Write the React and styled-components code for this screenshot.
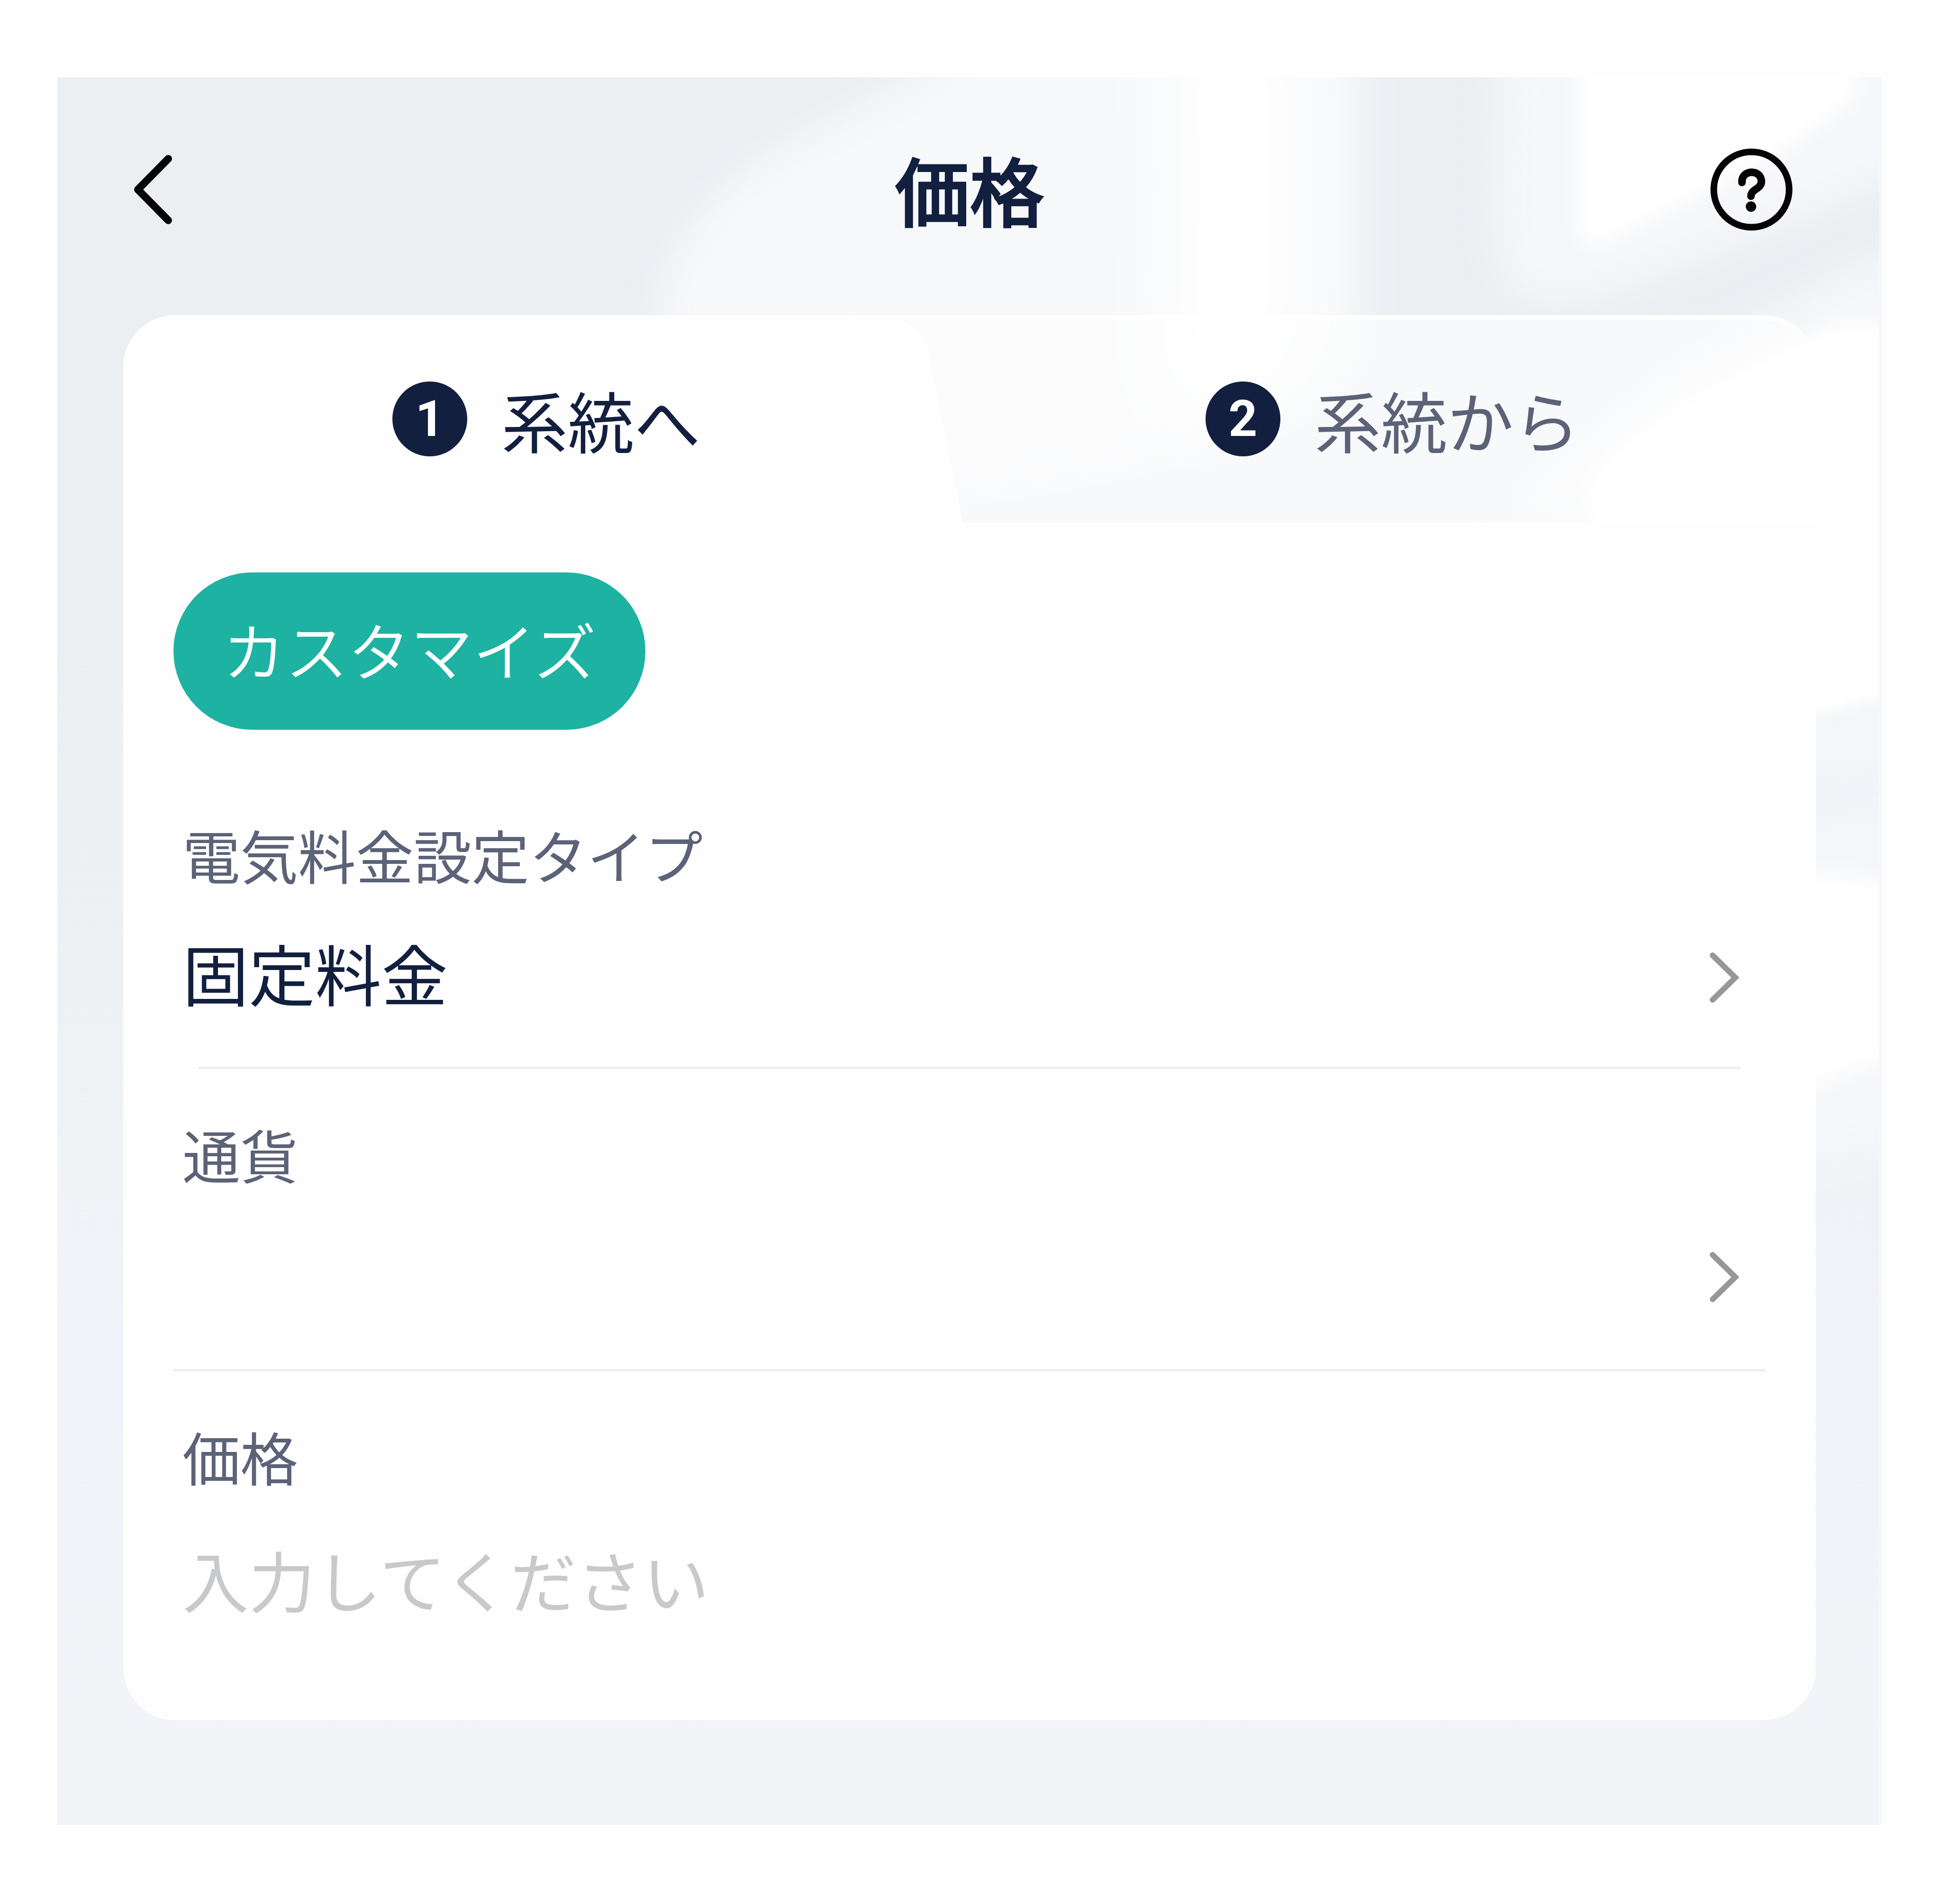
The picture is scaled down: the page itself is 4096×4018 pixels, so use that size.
import React, { useState } from "react";
import styled, { createGlobalStyle } from "styled-components";

const color = {
  navy: "#121f3e",
  muted: "#5c6277",
  placeholder: "#c8c9cb",
  accent: "#1eb2a2",
  line: "#eeeff2",
  chevron: "#979797",
};

const GlobalStyle = createGlobalStyle`
  *, *::before, *::after { box-sizing: border-box; }
  body {
    margin: 0;
    background: #fefefe;
    color: ${color.navy};
    font-family: "Noto Sans CJK JP", sans-serif;
  }
  button, input { font: inherit; color: inherit; }
`;

const Page = styled.main`
  padding: 163px 125px 165px 121px;
`;

const Screen = styled.div`
  position: relative;
  isolation: isolate;
  overflow: hidden;
  padding-bottom: 221px;
  background: linear-gradient(#ebeff2 0%, #ebeff2 30%, #eef1f4 52%, #f2f3f8 72%, #f3f4f8 100%);
`;

const Backdrop = styled.svg`
  position: absolute;
  inset: 0;
  z-index: -1;
  width: 100%;
  height: 100%;
`;

const Header = styled.header`
  display: grid;
  grid-template-columns: 1fr auto 1fr;
  align-items: center;
  height: 474px;
  margin-bottom: 28px;
  padding: 0 162px;
`;

const IconButton = styled.button`
  display: flex;
  justify-self: ${(p) => p.$side};
  padding: 0 ${(p) => (p.$side === "end" ? "26px" : "0")} 0 0;
  border: 0;
  background: none;
  cursor: pointer;
`;

const Title = styled.h1`
  margin: 0;
  padding-bottom: 4px;
  font-size: 158px;
  font-weight: 500;
  line-height: 228px;
  -webkit-text-stroke: 3px ${color.navy};
`;

const Card = styled.section`
  margin: 0 139px;
`;

const TabBar = styled.div`
  position: relative;
  isolation: isolate;
  display: flex;
  height: 438px;
  overflow: hidden;
  border-radius: 110px 110px 0 0;
  background: rgba(255, 255, 255, 0.6);
`;

const TabShape = styled.svg`
  position: absolute;
  inset: 0;
  z-index: -1;
  width: 100%;
  height: 100%;
`;

const Tab = styled.button`
  flex: 1;
  display: flex;
  align-items: center;
  justify-content: center;
  gap: 72px;
  padding: 0;
  border: 0;
  background: none;
  color: ${(p) => (p.$muted ? color.muted : color.navy)};
  font-size: 140px;
  line-height: 200px;
  cursor: pointer;
`;

const Badge = styled.span`
  display: flex;
  align-items: center;
  justify-content: center;
  width: 158px;
  height: 158px;
  border-radius: 50%;
  background: ${color.navy};
  color: #fff;
  font-family: Roboto, sans-serif;
  font-size: 106px;
  font-weight: 700;
  line-height: 158px;
`;

const Panel = styled.div`
  padding: 105px 106px 0;
  border-radius: 0 0 110px 110px;
  background: #fefefe;
`;

const Pill = styled.button`
  display: block;
  height: 332px;
  margin-bottom: 84px;
  padding: 0 104px 10px;
  border: 0;
  border-radius: 166px;
  background: ${color.accent};
  color: #fff;
  font-size: 132px;
  font-weight: 350;
  line-height: 200px;
  cursor: pointer;
`;

const Field = styled.div`
  padding: 90px 53px ${(p) => p.$bottom}px 19px;
`;

const Label = styled.label`
  display: block;
  margin-bottom: 73px;
  color: ${color.muted};
  font-size: 122px;
  line-height: 176px;
`;

const Picker = styled.button`
  display: flex;
  align-items: center;
  justify-content: space-between;
  width: 100%;
  height: 200px;
  padding: 0 3px 0 0;
  border: 0;
  background: none;
  text-align: left;
  cursor: pointer;
`;

const Value = styled.span`
  align-self: flex-start;
  font-size: 140px;
  line-height: 176px;
`;

const TextInput = styled.input`
  display: block;
  width: 100%;
  height: 200px;
  padding: 0 0 4px;
  border: 0;
  outline: 0;
  background: none;
  font-size: 140px;
  line-height: 196px;
  &::placeholder {
    color: ${color.placeholder};
    opacity: 1;
  }
`;

const Divider = styled.hr`
  height: 5px;
  margin: 0 ${(p) => p.$inset}px;
  border: 0;
  background: ${color.line};
`;

function WindowLight() {
  return (
    <Backdrop viewBox="46 63 1474 1412" preserveAspectRatio="none" aria-hidden="true">
      <defs>
        <filter id="soft" x="-30%" y="-30%" width="160%" height="160%" colorInterpolationFilters="sRGB">
          <feGaussianBlur stdDeviation="18" />
        </filter>
        <filter id="softer" x="-100%" y="-30%" width="300%" height="160%" colorInterpolationFilters="sRGB">
          <feGaussianBlur stdDeviation="32" />
        </filter>
        <filter id="edge" x="-30%" y="-30%" width="160%" height="160%" colorInterpolationFilters="sRGB">
          <feGaussianBlur stdDeviation="8" />
        </filter>
      </defs>
      <path
        d="M532 420V255C536 200 575 150 640 115C690 88 740 70 800 20H1100V290C1080 330 1000 370 780 400Z"
        fill="#f7f8fa"
        filter="url(#soft)"
      />
      <path
        d="M930 10H1056V290L970 350C900 330 960 220 930 10Z"
        fill="#fff"
        fillOpacity="0.9"
        filter="url(#softer)"
      />
      <path d="M1212 20H1560V130L1420 190L1290 240L1235 245C1215 240 1210 200 1208 180Z" fill="#f6f7f9" filter="url(#soft)" />
      <path d="M1274 20H1500V80L1430 130L1310 190Q1274 212 1274 180Z" fill="#fff" filter="url(#edge)" />
      <path d="M1360 290L1560 186V420H1200Z" fill="#f6f7f9" filter="url(#soft)" />
      <path
        d="M1282 440V395C1290 360 1380 310 1480 262L1560 262V562L1467 584L1282 600Z"
        fill="#fff"
        filter="url(#edge)"
      />
      <path d="M1400 596L1467 584L1560 560V730L1467 704H1400Z" fill="#f5f6f8" filter="url(#edge)" />
      <path d="M1400 642L1560 620V648L1400 662Z" fill="#f1f3f7" filter="url(#edge)" />
      <path d="M1400 860L1560 830V920L1400 960Z" fill="#f6f7f9" filter="url(#soft)" />
      <path d="M1400 704H1467Q1500 704 1560 724V842L1467 878L1400 888Z" fill="#fff" filter="url(#edge)" />
      <rect x="1518" y="63" width="2" height="1412" fill="#f8f8fa" />
    </Backdrop>
  );
}

function BackIcon() {
  return (
    <svg width="80" height="146" viewBox="0 0 80 146" fill="none" aria-hidden="true">
      <path d="M72 8L8 73L72 138" stroke="#050303" strokeWidth="16" strokeLinecap="round" strokeLinejoin="round" />
    </svg>
  );
}

function HelpIcon() {
  return (
    <svg width="174" height="174" viewBox="-87 -87 174 174" fill="none" aria-hidden="true">
      <circle r="79.5" stroke="#050303" strokeWidth="14" />
      <path
        d="M-20 -15V-17C-20 -43 21 -43 21 -17C21 -1 -1 -1 -1 14"
        stroke="#050303"
        strokeWidth="16"
        strokeLinecap="round"
      />
      <circle cx="-1" cy="36" r="11" fill="#050303" />
    </svg>
  );
}

function ChevronRight() {
  return (
    <svg width="62" height="106" viewBox="0 0 62 106" fill="none" aria-hidden="true">
      <path d="M6 6L54 53L6 100" stroke={color.chevron} strokeWidth="12" strokeLinecap="round" />
    </svg>
  );
}

export default function App() {
  const [price, setPrice] = useState("");

  return (
    <>
      <GlobalStyle />
      <Page lang="ja">
        <Screen>
          <WindowLight />
          <Header>
            <IconButton type="button" $side="start" aria-label="戻る">
              <BackIcon />
            </IconButton>
            <Title>価格</Title>
            <IconButton type="button" $side="end" aria-label="ヘルプ">
              <HelpIcon />
            </IconButton>
          </Header>

          <Card>
            <TabBar role="tablist">
              <TabShape viewBox="0 0 3572 438" preserveAspectRatio="none" aria-hidden="true">
                <path d="M0 0H1550C1640 4 1680 18 1696 60L1772 438H0Z" fill="#fefefe" />
                <path d="M1540 0H3462A110 110 0 0 1 3572 110A118 100 0 0 0 3454 10H1540Z" fill="#fff" />
              </TabShape>
              <Tab type="button" role="tab" aria-selected="true">
                <Badge>1</Badge>
                系統へ
              </Tab>
              <Tab type="button" role="tab" aria-selected="false" $muted>
                <Badge>2</Badge>
                系統から
              </Tab>
            </TabBar>

            <Panel role="tabpanel">
              <Pill type="button">カスタマイズ</Pill>

              <Field $bottom={88}>
                <Label htmlFor="tariff-type">電気料金設定タイプ</Label>
                <Picker type="button" id="tariff-type">
                  <Value>固定料金</Value>
                  <ChevronRight />
                </Picker>
              </Field>
              <Divider $inset={53} />

              <Field $bottom={94}>
                <Label htmlFor="currency">通貨</Label>
                <Picker type="button" id="currency">
                  <Value />
                  <ChevronRight />
                </Picker>
              </Field>
              <Divider $inset={0} />

              <Field $bottom={197}>
                <Label htmlFor="price">価格</Label>
                <TextInput
                  id="price"
                  inputMode="decimal"
                  placeholder="入力してください"
                  value={price}
                  onChange={(e) => setPrice(e.target.value)}
                />
              </Field>
            </Panel>
          </Card>
        </Screen>
      </Page>
    </>
  );
}
